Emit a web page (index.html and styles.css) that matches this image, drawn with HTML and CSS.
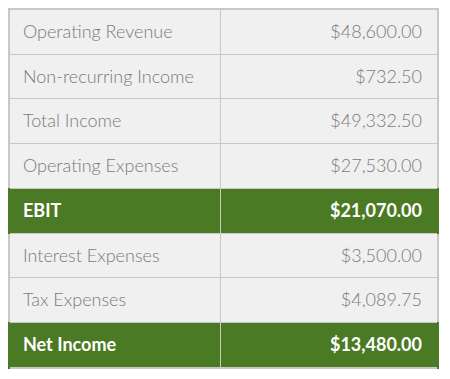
FILE: index.html
```html
<!DOCTYPE html>
<html>
<head>
<meta charset="utf-8">
<link rel="stylesheet" href="styles.css">
</head>
<body>
<table class="fin">
  <tbody>
    <tr><td class="label">Operating Revenue</td><td class="amt">$48,600.00</td></tr>
    <tr><td class="label">Non-recurring Income</td><td class="amt">$732.50</td></tr>
    <tr><td class="label">Total Income</td><td class="amt">$49,332.50</td></tr>
    <tr><td class="label">Operating Expenses</td><td class="amt">$27,530.00</td></tr>
    <tr class="total"><td class="label">EBIT</td><td class="amt">$21,070.00</td></tr>
    <tr><td class="label">Interest Expenses</td><td class="amt">$3,500.00</td></tr>
    <tr><td class="label">Tax Expenses</td><td class="amt">$4,089.75</td></tr>
    <tr class="total"><td class="label">Net Income</td><td class="amt">$13,480.00</td></tr>
  </tbody>
</table>
</body>
</html>
```
FILE: styles.css
```css
html, body {
  margin: 0;
  background: #ffffff;
}
body {
  padding: 8px 0 0 8px;
  font-family: Lato, "Open Sans", sans-serif;
}
.fin {
  border-collapse: collapse;
  width: 431px;
  border: 2px solid #c8c8c8;
  font-size: 18px;
}
.fin td {
  background: #f0f0f0;
  border: 1px solid #c8c8c8;
  color: #7a7a7a;
  padding: 11px 14px 12px 13px;
  line-height: 20.7px;
  font-weight: 300;
}
.fin td.label {
  width: 183px;
}
.fin td.amt {
  text-align: right;
  padding-right: 15px;
}
.fin tr.total td {
  background: #4a7a23;
  color: #ffffff;
  font-weight: 700;
}
.fin tr.total td.label {
  border-left: 2px solid #4a7a23;
}
.fin tr.total td.amt {
  border-right: 2px solid #4a7a23;
}
```
